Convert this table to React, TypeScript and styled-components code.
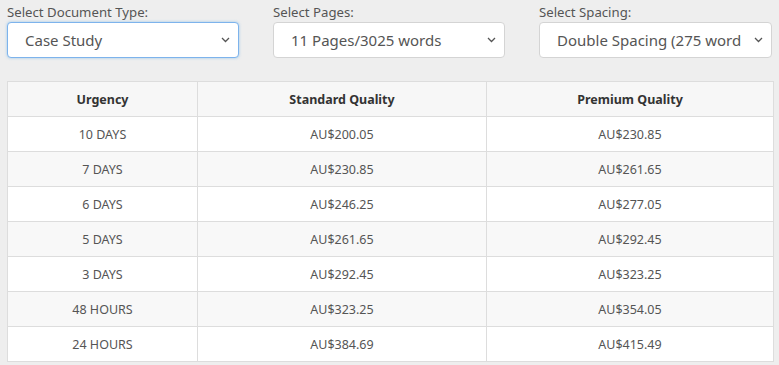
import React from "react";
import styled, { createGlobalStyle } from "styled-components";

const Global = createGlobalStyle`
  html, body { margin: 0; padding: 0; background: #eeeeee; }
  body { font-family: "Noto Sans", "Open Sans", sans-serif; }
`;

const Page = styled.div`
  padding: 4px 6px 0 7px;
  width: 779px;
  box-sizing: border-box;
`;

const Controls = styled.div`
  display: grid;
  grid-template-columns: 232px 232px 233px;
  column-gap: 34px;
`;

const Field = styled.div`
  display: flex;
  flex-direction: column;
`;

const Label = styled.label`
  font-size: 13.2px;
  color: #555;
  line-height: 16px;
  margin-bottom: 2px;
`;

const Select = styled.div<{ $focused?: boolean }>`
  height: 36px;
  box-sizing: border-box;
  background: #fff;
  border: 1px solid ${(p) => (p.$focused ? "#7db3ec" : "#d4d4d4")};
  border-radius: 4px;
  box-shadow: ${(p) => (p.$focused ? "0 0 3px rgba(102,175,233,0.6)" : "none")};
  display: flex;
  align-items: center;
  padding: 0 8px 0 17px;
  font-size: 15px;
  color: #555;
  overflow: hidden;
`;

const SelectText = styled.span<{ $clip?: number }>`
  flex: ${(p) => (p.$clip ? "none" : "1")};
  width: ${(p) => (p.$clip ? `${p.$clip}px` : "auto")};
  margin-right: ${(p) => (p.$clip ? "auto" : "0")};
  white-space: nowrap;
  overflow: hidden;
`;

const Chevron = styled.svg`
  flex: none;
  margin-left: 4px;
`;

const Table = styled.table`
  margin-top: 23px;
  width: 766px;
  border-collapse: collapse;
  background: #fff;
  table-layout: fixed;
`;

const Th = styled.th`
  height: 35px;
  box-sizing: border-box;
  border: 1px solid #dddddd;
  background: #f7f7f7;
  font-size: 12.5px;
  font-weight: 700;
  color: #333;
  text-align: center;
  padding: 0;
`;

const Row = styled.tr<{ $stripe?: boolean }>`
  background: ${(p) => (p.$stripe ? "#f8f8f8" : "#ffffff")};
`;

const Td = styled.td`
  height: 35px;
  box-sizing: border-box;
  border: 1px solid #dddddd;
  font-size: 12.5px;
  color: #555;
  text-align: center;
  padding: 0;
`;

const rows = [
  ["10 DAYS", "AU$200.05", "AU$230.85"],
  ["7 DAYS", "AU$230.85", "AU$261.65"],
  ["6 DAYS", "AU$246.25", "AU$277.05"],
  ["5 DAYS", "AU$261.65", "AU$292.45"],
  ["3 DAYS", "AU$292.45", "AU$323.25"],
  ["48 HOURS", "AU$323.25", "AU$354.05"],
  ["24 HOURS", "AU$384.69", "AU$415.49"],
];

const Down = () => (
  <Chevron width="9" height="6" viewBox="0 0 9 6">
    <path d="M1 1l3.5 3.5L8 1" fill="none" stroke="#555" strokeWidth="1.3" />
  </Chevron>
);

export default function App() {
  return (
    <>
      <Global />
      <Page>
        <Controls>
          <Field>
            <Label>Select Document Type:</Label>
            <Select $focused>
              <SelectText>Case Study</SelectText>
              <Down />
            </Select>
          </Field>
          <Field>
            <Label>Select Pages:</Label>
            <Select>
              <SelectText>11 Pages/3025 words</SelectText>
              <Down />
            </Select>
          </Field>
          <Field>
            <Label>Select Spacing:</Label>
            <Select>
              <SelectText $clip={184}>Double Spacing (275 words)</SelectText>
              <Down />
            </Select>
          </Field>
        </Controls>
        <Table>
          <colgroup>
            <col style={{ width: 190 }} />
            <col style={{ width: 289 }} />
            <col style={{ width: 287 }} />
          </colgroup>
          <thead>
            <tr>
              <Th>Urgency</Th>
              <Th>Standard Quality</Th>
              <Th>Premium Quality</Th>
            </tr>
          </thead>
          <tbody>
            {rows.map((r, i) => (
              <Row key={r[0]} $stripe={i % 2 === 1}>
                <Td>{r[0]}</Td>
                <Td>{r[1]}</Td>
                <Td>{r[2]}</Td>
              </Row>
            ))}
          </tbody>
        </Table>
      </Page>
    </>
  );
}
